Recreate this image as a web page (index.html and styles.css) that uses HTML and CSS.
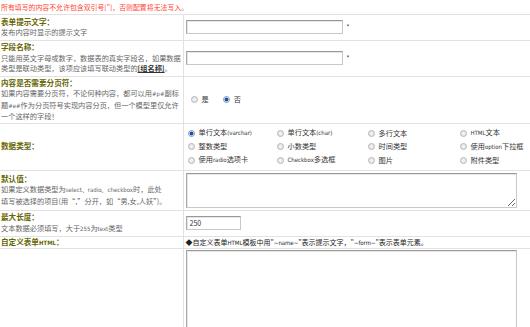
FILE: index.html
```html
<!DOCTYPE html>
<html lang="zh-CN">
<head>
    <meta charset="UTF-8">
    <title>字段设置</title>
    <link rel="stylesheet" href="styles.css">
</head>
<body>
    <table class="form-table">
        <colgroup>
            <col class="col-label">
            <col>
        </colgroup>
        <tr class="notice-row">
            <td colspan="2" class="notice">所有填写的内容不允许包含双引号["]，否则配置将无法写入。</td>
        </tr>
        <tr class="row-short">
            <td class="label-cell">
                <div class="label">表单提示文字：</div>
                <div class="desc">发布内容时显示的提示文字</div>
            </td>
            <td class="field-cell">
                <input type="text" class="text-input"> <span class="required">*</span>
            </td>
        </tr>
        <tr class="row-mid">
            <td class="label-cell">
                <div class="label">字段名称：</div>
                <div class="desc">只能用英文字母或数字，数据表的真实字段名，如果数据<br>类型是联动类型，该项应该填写联动类型的<a href="#" class="group-link">[组名称]</a>。</div>
            </td>
            <td class="field-cell">
                <input type="text" class="text-input"> <span class="required">*</span>
            </td>
        </tr>
        <tr class="row-tall">
            <td class="label-cell">
                <div class="label">内容是否需要分页符：</div>
                <div class="desc">如果内容需要分页符，不论何种内容，都可以用<span class="latin">#p#</span>副标<br>题<span class="latin">#e#</span>作为分页符号实现内容分页，但一个模型里仅允许<br>一个这样的字段！</div>
            </td>
            <td class="field-cell">
                <div class="yes-no">
                    <label class="option"><input type="radio" name="page" class="radio"><span>是</span></label>
                    <label class="option"><input type="radio" name="page" class="radio" checked><span>否</span></label>
                </div>
            </td>
        </tr>
        <tr class="row-tall">
            <td class="label-cell">
                <div class="label">数据类型：</div>
            </td>
            <td class="field-cell">
                <div class="type-grid">
                    <label class="option"><input type="radio" name="dtype" class="radio" checked><span>单行文本<span class="latin">(varchar)</span></span></label>
                    <label class="option"><input type="radio" name="dtype" class="radio"><span>单行文本<span class="latin">(char)</span></span></label>
                    <label class="option"><input type="radio" name="dtype" class="radio"><span>多行文本</span></label>
                    <label class="option"><input type="radio" name="dtype" class="radio"><span><span class="latin">HTML</span>文本</span></label>
                    <label class="option"><input type="radio" name="dtype" class="radio"><span>整数类型</span></label>
                    <label class="option"><input type="radio" name="dtype" class="radio"><span>小数类型</span></label>
                    <label class="option"><input type="radio" name="dtype" class="radio"><span>时间类型</span></label>
                    <label class="option"><input type="radio" name="dtype" class="radio"><span>使用<span class="latin">option</span>下拉框</span></label>
                    <label class="option"><input type="radio" name="dtype" class="radio"><span>使用<span class="latin">radio</span>选项卡</span></label>
                    <label class="option"><input type="radio" name="dtype" class="radio"><span><span class="latin">Checkbox</span>多选框</span></label>
                    <label class="option"><input type="radio" name="dtype" class="radio"><span>图片</span></label>
                    <label class="option"><input type="radio" name="dtype" class="radio"><span>附件类型</span></label>
                </div>
            </td>
        </tr>
        <tr>
            <td class="label-cell">
                <div class="label">默认值：</div>
                <div class="desc">如果定义数据类型为<span class="latin">select、radio、checkbox</span>时，此处<br>填写被选择的项目(用“,”分开，如“男,女,人妖”)。</div>
            </td>
            <td class="field-cell">
                <textarea class="text-area short-area"></textarea>
            </td>
        </tr>
        <tr class="row-short">
            <td class="label-cell">
                <div class="label">最大长度：</div>
                <div class="desc">文本数据必须填写，大于<span class="latin">255</span>为<span class="latin">text</span>类型</div>
            </td>
            <td class="field-cell">
                <input type="text" class="text-input small-input" value="250">
            </td>
        </tr>
        <tr>
            <td class="label-cell">
                <div class="label">自定义表单<span class="latin">HTML</span>：</div>
            </td>
            <td class="field-cell hint">◆自定义表单<span class="latin">HTML</span>模板中用"<span class="latin">~name~</span>"表示提示文字，"<span class="latin">~form~</span>"表示表单元素。</td>
        </tr>
        <tr>
            <td class="label-cell"></td>
            <td class="field-cell">
                <textarea class="text-area big-area"></textarea>
            </td>
        </tr>
    </table>
</body>
</html>
```

FILE: styles.css
```css
* {
    margin: 0;
    padding: 0;
    box-sizing: border-box;
}

body {
    font-family: 'Noto Sans CJK SC', sans-serif;
    font-size: 7.2px;
    line-height: 10.5px;
    color: #333;
    background: #fff;
    overflow: hidden;
}

.latin {
    font-family: 'DejaVu Sans Condensed', 'Liberation Sans Narrow', sans-serif;
    font-size: 6px;
}

.form-table {
    width: 100%;
    border-collapse: collapse;
    table-layout: fixed;
}

.col-label {
    width: 183px;
}

.form-table td {
    border: 1px solid #e2e2e2;
    vertical-align: middle;
    padding: 0 2px;
    overflow: hidden;
}

.notice-row td {
    border-top: none;
    border-left: none;
    border-right: none;
    height: 14px;
    padding: 0 1px;
}

.notice {
    color: #f43;
    font-size: 6.9px;
}

.label-cell {
    border-left: none !important;
    padding-left: 1px !important;
}

.field-cell {
    border-right: none !important;
}

.label {
    color: #666600;
    font-weight: bold;
    font-size: 7.6px;
}

.desc {
    color: #666;
    white-space: nowrap;
}

.group-link {
    color: #333;
    font-weight: bold;
}

.row-short td {
    height: 26px;
}

.row-mid td {
    height: 36px;
}

.row-tall td {
    height: 47px;
}

.text-input {
    width: 157px;
    height: 14px;
    border: 1px solid #c8c8c8;
    border-top-color: #999;
    border-left-color: #aaa;
    box-shadow: inset 1px 1px 0 #e6e6e6;
    font: inherit;
    font-size: 7px;
    padding: 0 3px;
    vertical-align: middle;
}

.small-input {
    width: 55px;
    color: #333;
}

.required {
    color: #333;
    margin-left: 2px;
    vertical-align: middle;
}

.yes-no {
    display: flex;
    gap: 14px;
    padding-left: 5px;
}

.option {
    display: flex;
    align-items: center;
    gap: 4px;
    white-space: nowrap;
    color: #333;
}

.radio {
    appearance: none;
    width: 7px;
    height: 7px;
    border-radius: 50%;
    border: 1px solid #b8b8b8;
    background: radial-gradient(circle, #f4f4f4 0, #ddd 100%);
    flex-shrink: 0;
}

.radio:checked {
    border-color: #8aa0c0;
    background: radial-gradient(circle, #1e4f9c 0 1.6px, #d8e4f4 2.2px);
}

.type-grid {
    display: grid;
    grid-template-columns: 89px 91px 92px 1fr;
    grid-auto-rows: 13.5px;
    padding-left: 2px;
}

.text-area {
    display: block;
    width: 331px;
    border: 1px solid #c8c8c8;
    border-top-color: #999;
    border-left-color: #aaa;
    box-shadow: inset 1px 1px 0 #e6e6e6;
    font: inherit;
}

.short-area {
    height: 35px;
    margin: 2px 0;
}

.big-area {
    height: 90px;
    margin-top: 1px;
}

.hint {
    color: #222;
    font-size: 7px;
}
```
